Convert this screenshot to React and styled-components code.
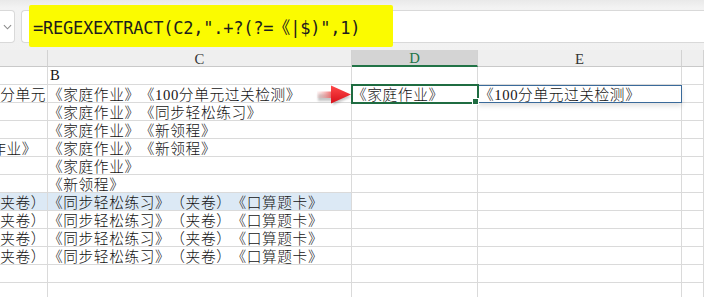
import styled, { createGlobalStyle } from 'styled-components';

const GlobalStyle = createGlobalStyle`
  html, body {
    margin: 0;
    background: #ffffff;
    overflow: hidden;
  }
  * {
    text-spacing-trim: space-all;
  }
`;

const cellFont = `'Liberation Serif', 'Noto Sans CJK SC', serif`;

const rows = [
  { c: 'B' },
  { b: '《100分单元', c: '《家庭作业》《100分单元过关检测》', d: '《家庭作业》', e: '《100分单元过关检测》' },
  { c: '《家庭作业》《同步轻松练习》' },
  { c: '《家庭作业》《新领程》' },
  { b: '《家庭作业》', bPad: 10, c: '《家庭作业》《新领程》' },
  { c: '《家庭作业》' },
  { c: '《新领程》' },
  { b: '（夹卷）', c: '《同步轻松练习》（夹卷）《口算题卡》', hl: true },
  { b: '（夹卷）', c: '《同步轻松练习》（夹卷）《口算题卡》' },
  { b: '（夹卷）', c: '《同步轻松练习》（夹卷）《口算题卡》' },
  { b: '（夹卷）', c: '《同步轻松练习》（夹卷）《口算题卡》' },
  {},
  {},
];

const App = () => {
  return (
    <>
      <GlobalStyle />
      <Page>
        <Toolbar>
          <NameBox>
            <Chevron viewBox="0 0 10 6">
              <path d="M1 1 L5 5 L9 1" />
            </Chevron>
          </NameBox>
          <FormulaBox>
            <Highlight>=REGEXEXTRACT(C2,".+?(?=《|$)",1)</Highlight>
          </FormulaBox>
        </Toolbar>
        <Sheet>
          <HeaderCell />
          <HeaderCell>C</HeaderCell>
          <HeaderCell $selected>D</HeaderCell>
          <HeaderCell>E</HeaderCell>
          <HeaderCell />
          {rows.map((r, i) => (
            <Row key={i} r={r} row={i} />
          ))}
          <Arrow viewBox="0 0 38 22">
            <defs>
              <linearGradient id="tail" x1="0" x2="1" y1="0" y2="0">
                <stop offset="0" stopColor="#f5b3b3" stopOpacity="0.15" />
                <stop offset="1" stopColor="#ee5a5a" />
              </linearGradient>
              <linearGradient id="head" x1="0" x2="0" y1="0" y2="1">
                <stop offset="0" stopColor="#ff4a4a" />
                <stop offset="1" stopColor="#d8101a" />
              </linearGradient>
              <filter id="blur">
                <feGaussianBlur stdDeviation="1.2" />
              </filter>
            </defs>
            <polygon points="2,9 17,9 17,4 35,12 17,20 17,16 2,16" fill="#000" opacity="0.22" filter="url(#blur)" />
            <rect x="1" y="6.5" width="16" height="6.5" fill="url(#tail)" />
            <polygon points="15,0.5 35,9.5 15,18.5" fill="url(#head)" />
          </Arrow>
        </Sheet>
      </Page>
    </>
  );
};

const Row = ({ r, row }) => (
  <>
    <Cell $hl={r.hl} $right $pad={r.bPad ?? 1}>
      <Text>{r.b}</Text>
    </Cell>
    <Cell $hl={r.hl} $pad={r.c === 'B' ? 2 : 0}>
      <Text>{r.c}</Text>
    </Cell>
    <Cell $active={row === 1} $pad={0}>
      <Text>{r.d}</Text>
    </Cell>
    <Cell $ref={row === 1} $pad={1}>
      <Text>{r.e}</Text>
    </Cell>
    <Cell />
  </>
);

export default App;

const Page = styled.div`
  width: 704px;
  height: 297px;
  overflow: hidden;
  background: #ffffff;
`;

const Toolbar = styled.div`
  display: flex;
  align-items: stretch;
  gap: 6px;
  height: 50px;
  box-sizing: border-box;
  padding: 10px 0 7px;
  background: linear-gradient(#e9e9e9 0px, #f3f3f3 8px, #f1f1f1 100%);
`;

const NameBox = styled.div`
  display: flex;
  align-items: center;
  justify-content: flex-end;
  width: 15px;
  box-sizing: border-box;
  padding-right: 2px;
  background: #ffffff;
  border: 1px solid #d9d9d9;
  border-left: none;
  border-radius: 0 4px 4px 0;
`;

const Chevron = styled.svg`
  width: 9px;
  height: 6px;
  fill: none;
  stroke: #8a8a8a;
  stroke-width: 1.2;
`;

const FormulaBox = styled.div`
  flex: 1;
  display: flex;
  align-items: center;
  padding-left: 7px;
  background: #ffffff;
  border: 1px solid #d9d9d9;
  border-right: none;
  border-radius: 4px 0 0 4px;
`;

const Highlight = styled.span`
  display: flex;
  align-items: center;
  width: 364px;
  height: 42px;
  margin: -6px 0 -4px;
  box-sizing: border-box;
  padding: 2px 0 0 4px;
  background: #fbfb00;
  border-radius: 2px;
  font-family: 'DejaVu Sans Mono', 'Noto Sans CJK SC', monospace;
  font-size: 17px;
  letter-spacing: -0.22px;
  color: #1d1d1d;
  white-space: nowrap;
`;

const Sheet = styled.div`
  position: relative;
  display: grid;
  grid-template-columns: 48px 304px 126px 204px 1fr;
  grid-template-rows: 17px repeat(13, 18px);
`;

const HeaderCell = styled.div`
  display: flex;
  align-items: center;
  justify-content: center;
  box-sizing: border-box;
  background: ${(p) => (p.$selected ? '#d4d4d4' : '#efefef')};
  border-right: 1px solid #d2d2d2;
  border-bottom: ${(p) => (p.$selected ? '2px solid #217346' : '1px solid #c9c9c9')};
  color: ${(p) => (p.$selected ? '#217346' : '#333333')};
  font-family: 'Liberation Serif', serif;
  font-size: 14.7px;
  padding-top: 2px;
`;

const Text = styled.span`
  flex: none;
`;

const Cell = styled.div`
  position: relative;
  display: flex;
  align-items: center;
  justify-content: ${(p) => (p.$right ? 'flex-end' : 'flex-start')};
  box-sizing: border-box;
  overflow: ${(p) => (p.$active ? 'visible' : 'hidden')};
  white-space: nowrap;
  background: ${(p) => (p.$hl ? '#dce9f5' : '#ffffff')};
  border-right: 1px solid #dadada;
  border-bottom: 1px solid #dadada;
  font-family: ${cellFont};
  font-size: 14.7px;
  font-weight: 300;
  letter-spacing: 0.6px;
  color: #141414;
  z-index: ${(p) => (p.$active ? 2 : p.$ref ? 1 : 0)};
  outline: ${(p) => (p.$active ? '2px solid #1f6c41' : p.$ref ? '1px solid #3a6a9a' : 'none')};
  outline-offset: -1px;
  box-shadow: ${(p) => (p.$ref ? '0 3px 5px rgba(0, 0, 0, 0.12)' : 'none')};

  & > ${Text} {
    margin: ${(p) => (p.$right ? `0 ${p.$pad || 0}px 0 0` : `0 0 0 ${p.$pad || 0}px`)};
  }

  ${(p) =>
    p.$active &&
    `
    &::after {
      content: '';
      position: absolute;
      right: -2px;
      bottom: -3px;
      width: 5px;
      height: 5px;
      background: #1f6c41;
      border: 1px solid #ffffff;
    }
  `}
`;

const Arrow = styled.svg`
  position: absolute;
  left: 316px;
  top: 35px;
  width: 38px;
  height: 22px;
  z-index: 3;
`;
